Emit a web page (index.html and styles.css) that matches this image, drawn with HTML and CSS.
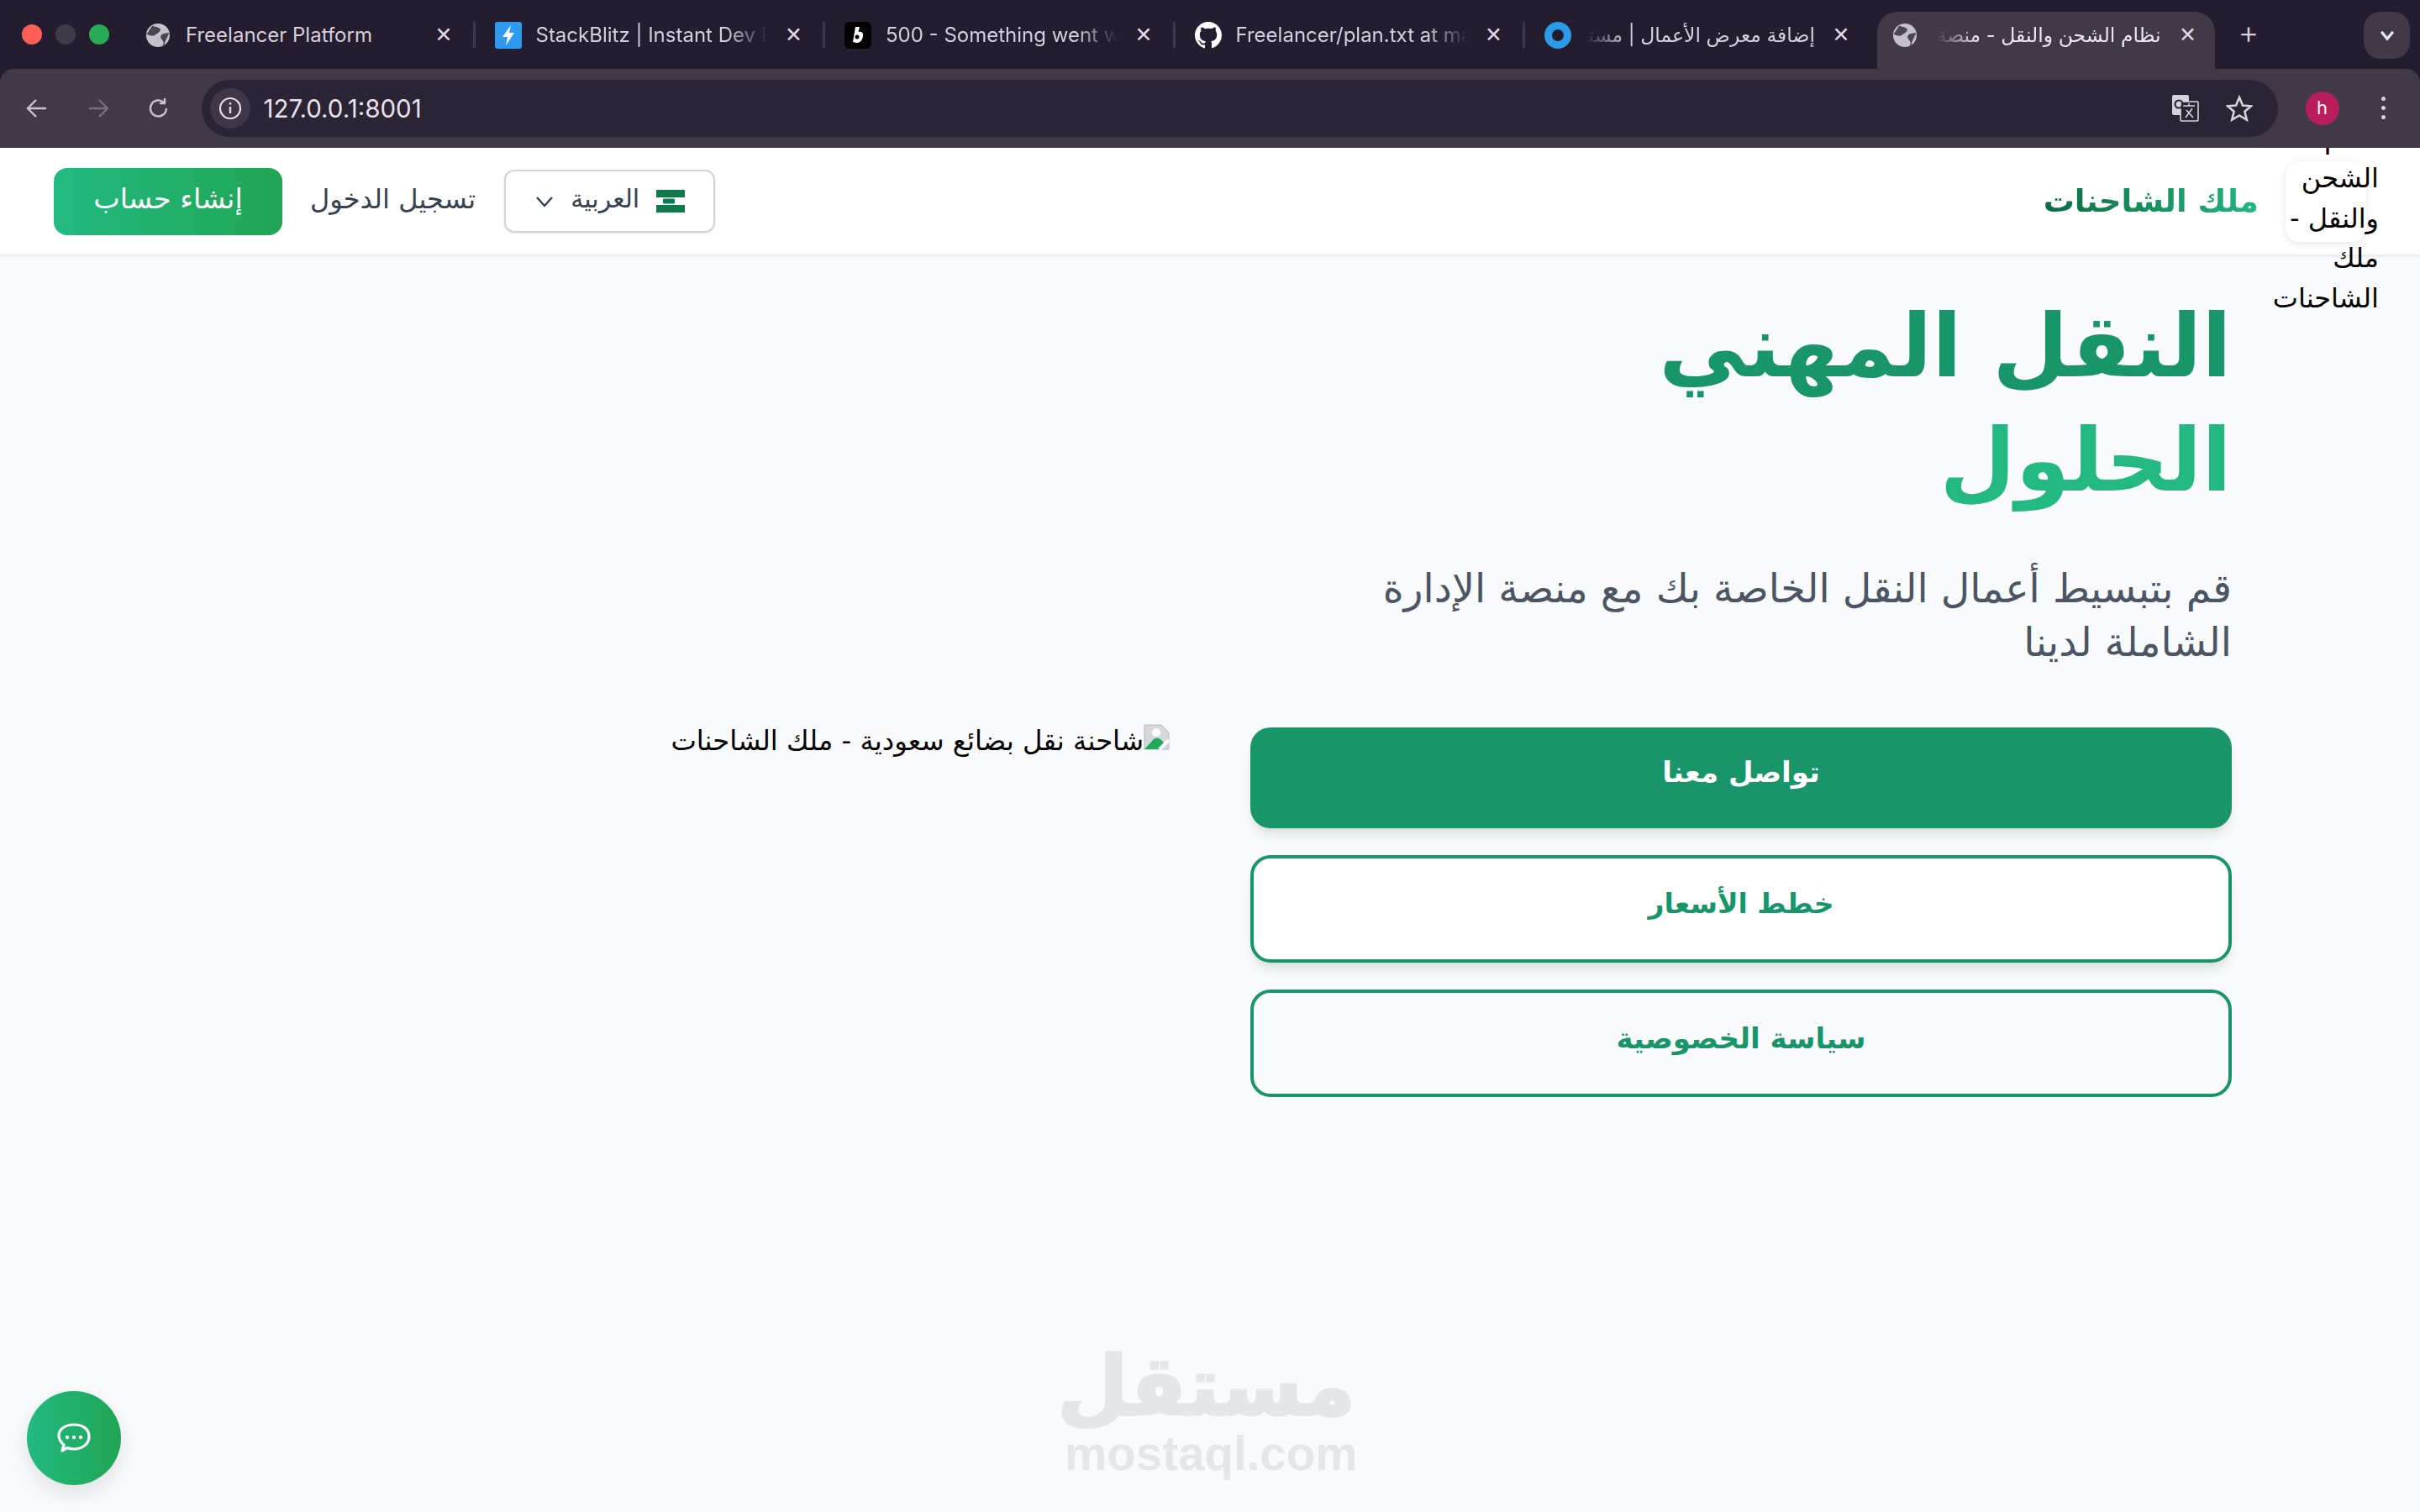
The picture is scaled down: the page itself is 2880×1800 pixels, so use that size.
FILE: index.html
```html
<!DOCTYPE html>
<html lang="ar">
<head>
<meta charset="utf-8">
<title>نظام الشحن والنقل - ملك الشاحنات</title>
<link rel="stylesheet" href="styles.css">
</head>
<body>
<div class="browser">
  <div class="tabstrip">
    <div class="lights"><i class="light red"></i><i class="light grey"></i><i class="light green"></i></div>
    <div class="tab">
      <svg class="fav" viewBox="0 0 32 32"><circle cx="16" cy="16" r="14" fill="#c4c2c8"/><path d="M9 5c4 3 8 1 9 4s-4 4-6 6-7 0-9-1M29 14c-4 0-8 0-9 3s2 4 3 6 0 5-1 6" fill="#4b4552" stroke="#4b4552" stroke-width="1.5"/></svg>
      <span class="title">Freelancer Platform</span><span class="close">✕</span>
    </div>
    <div class="tab">
      <svg class="fav" viewBox="0 0 32 32"><rect x="0" y="0" width="32" height="32" rx="3" fill="#2f9bf0"/><path d="M19 4 9 18h6l-2 10 10-15h-6z" fill="#fff"/></svg>
      <span class="title fade">StackBlitz | Instant Dev Environments</span><span class="close">✕</span>
    </div>
    <div class="tab">
      <svg class="fav" viewBox="0 0 32 32"><rect width="32" height="32" rx="6" fill="#000"/><path d="M13 6h5l-1.500 6c4-1 6 1 5.500 5-.5 5-4 8-7 8-2 0-4-1-5-1z" fill="#fff"/><circle cx="15" cy="18" r="2.500" fill="#000"/></svg>
      <span class="title fade">500 - Something went wrong</span><span class="close">✕</span>
    </div>
    <div class="tab">
      <svg class="fav" viewBox="0 0 16 16"><path fill="#fff" d="M8 0C3.580 0 0 3.580 0 8c0 3.540 2.290 6.530 5.470 7.590.4.070.55-.17.55-.38 0-.19-.01-.82-.01-1.490-2.010.37-2.530-.49-2.690-.94-.09-.23-.48-.94-.82-1.130-.28-.15-.68-.52-.01-.53.63-.01 1.080.58 1.230.82.720 1.210 1.870.87 2.330.66.070-.52.280-.87.510-1.070-1.780-.2-3.640-.89-3.640-3.950 0-.87.310-1.590.820-2.150-.08-.2-.36-1.020.08-2.120 0 0 .67-.21 2.200.82.640-.18 1.320-.27 2-.27s1.360.09 2 .27c1.530-1.040 2.200-.82 2.200-.82.440 1.100.16 1.920.08 2.120.51.560.820 1.270.820 2.150 0 3.070-1.870 3.750-3.650 3.950.290.250.540.730.540 1.480 0 1.070-.01 1.930-.01 2.200 0 .210.150.460.550.380A8.010 8.010 0 0 0 16 8c0-4.420-3.580-8-8-8z"/></svg>
      <span class="title fade">Freelancer/plan.txt at main</span><span class="close">✕</span>
    </div>
    <div class="tab">
      <svg class="fav" viewBox="0 0 32 32"><circle cx="16" cy="16" r="11.500" fill="none" stroke="#2b9be6" stroke-width="9"/></svg>
      <span class="title arabic">إضافة معرض الأعمال | مستقل</span><span class="close">✕</span>
    </div>
    <div class="tab active">
      <svg class="fav" viewBox="0 0 32 32"><circle cx="16" cy="16" r="14" fill="#c4c2c8"/><path d="M9 5c4 3 8 1 9 4s-4 4-6 6-7 0-9-1M29 14c-4 0-8 0-9 3s2 4 3 6 0 5-1 6" fill="#4b4552" stroke="#4b4552" stroke-width="1.500"/></svg>
      <span class="title arabic">نظام الشحن والنقل - منصة إدارة</span><span class="close">✕</span>
    </div>
    <span class="newtab">+</span>
    <span class="tabmenu"><svg viewBox="0 0 16 16"><path d="M3 5l5 6 5-6" fill="none" stroke="#e8e2ec" stroke-width="2.400"/></svg></span>
  </div>
  <div class="toolbar">
    <svg class="nav" viewBox="0 0 28 28"><path d="M25 14H4M13 4 3 14l10 10" fill="none" stroke="#c9c3cd" stroke-width="2.400"/></svg>
    <svg class="nav dim" viewBox="0 0 28 28"><path d="M3 14h21M15 4l10 10-10 10" fill="none" stroke="#77717d" stroke-width="2.400"/></svg>
    <svg class="nav" viewBox="0 0 28 28"><path d="M23 14a9.500 9.500 0 1 1-3-7M21 2v6h-6" fill="none" stroke="#c9c3cd" stroke-width="2.400"/></svg>
    <div class="omnibox">
      <span class="chip"><svg viewBox="0 0 28 28"><circle cx="14" cy="14" r="12" fill="none" stroke="#e4dee8" stroke-width="2.200"/><path d="M14 12v8M14 7v2.500" stroke="#e4dee8" stroke-width="2.400"/></svg></span>
      <span class="url">127.0.0.1:8001</span>
      <svg class="translate" viewBox="0 0 32 32"><rect x="0" y="0" width="20" height="24" rx="2" fill="#d8d0dc"/><rect x="10" y="8" width="21" height="23" rx="1" fill="#2b2435" stroke="#d8d0dc" stroke-width="1.600"/><path d="M13 13h14M20 10v3M16 27l8-11M17 18l8 9" fill="none" stroke="#d8d0dc" stroke-width="1.600"/><circle cx="8" cy="11" r="4.500" fill="none" stroke="#2b2435" stroke-width="2.200"/></svg>
      <svg class="star" viewBox="0 0 32 32"><path d="M16 3l4 9.500 10 .8-7.600 6.500 2.400 9.800L16 24.400 7.200 29.600 9.600 19.800 2 13.300l10-.8z" fill="none" stroke="#d8d0dc" stroke-width="2.600"/></svg>
    </div>
    <span class="avatar">h</span>
    <span class="dots"><i></i><i></i><i></i></span>
  </div>
</div>

<header class="site-header">
  <div class="brand">
    <div class="logo-card"><span class="logo-alt">نظام<br>الشحن<br>والنقل -<br>ملك<br>الشاحنات</span></div>
    <span class="brand-name">ملك الشاحنات</span>
  </div>
  <nav class="actions">
    <button class="lang">
      <svg class="flag" viewBox="0 0 34 27"><rect width="34" height="27" fill="#fff"/><rect width="34" height="9" fill="#0f7a4b"/><rect y="18" width="34" height="9" fill="#0f7a4b"/><rect x="8" y="10.500" width="14" height="6" rx="1" fill="#0f7a4b"/></svg>
      <span class="lang-name">العربية</span>
      <svg class="caret" viewBox="0 0 24 16"><path d="M3 3l9 10 9-10" fill="none" stroke="#374151" stroke-width="2.400"/></svg>
    </button>
    <a class="login">تسجيل الدخول</a>
    <a class="signup">إنشاء حساب</a>
  </nav>
</header>

<main class="hero">
  <h1 class="hero-title"><span class="line-one">النقل المهني</span><span class="line-two">الحلول</span></h1>
  <p class="hero-sub">قم بتبسيط أعمال النقل الخاصة بك مع منصة الإدارة الشاملة لدينا</p>
  <div class="hero-row">
    <div class="cta">
      <a class="btn primary">تواصل معنا</a>
      <a class="btn secondary">خطط الأسعار</a>
      <a class="btn outline">سياسة الخصوصية</a>
    </div>
    <div class="broken">
      <svg class="broken-icon" viewBox="0 0 31 31"><path d="M1 1h20l9 9v20H1z" fill="#d5d7da" stroke="#b8babd"/><circle cx="15" cy="10" r="5" fill="#fff"/><path d="M1 30 12 18q4-3 8 0l4 4-7 8z" fill="#22a85a"/><path d="M19 30l11-11" stroke="#fff" stroke-width="4"/></svg>
      <span>شاحنة نقل بضائع سعودية - ملك الشاحنات</span>
    </div>
  </div>
</main>

<div class="watermark"><span class="wm-ar">مستقل</span><span class="wm-en">mostaql.com</span></div>

<button class="chat"><svg viewBox="0 0 40 36"><path d="M6 33l2-7C3 22 2 18 2 15 2 7 10 2 20 2s18 5 18 14-8 15-18 15c-3 0-6-.5-8-1.500z" fill="none" stroke="#fff" stroke-width="3.200" stroke-linejoin="round"/><circle cx="12" cy="17" r="2.200" fill="#fff"/><circle cx="20" cy="17" r="2.200" fill="#fff"/><circle cx="28" cy="17" r="2.200" fill="#fff"/></svg></button>
</body>
</html>
```
FILE: styles.css
```css
* { box-sizing: border-box; }
html, body { margin: 0; height: 1800px; overflow: hidden; }
body { background: #f9fafb; font-family: "DejaVu Sans", sans-serif; color: #000; position: relative; }

.browser { position: relative; z-index: 3; height: 176px; background: #231d2f; font-family: Inter, "DejaVu Sans", sans-serif; }
.tabstrip { display: flex; align-items: flex-end; height: 82px; position: relative; }
.lights { display: flex; gap: 16px; width: 149px; padding: 0 0 29px 26px; }
.light { width: 24px; height: 24px; border-radius: 50%; }
.red { background: #ff5f57; }
.grey { background: #403a48; }
.green { background: #27ab54; }
.tab { width: 416.500px; height: 68px; display: flex; align-items: center; padding: 0 0 13px 23px; position: relative; color: #d6cfdb; font-size: 24px; }
.tab::after { content: ""; position: absolute; right: 0; top: 12px; width: 3px; height: 31px; background: #3f3847; }
.tab:has(+ .active)::after { display: none; }
.fav { width: 32px; height: 32px; flex: none; }
.title { width: 276px; margin-left: 17px; overflow: hidden; white-space: nowrap; flex: none; }
.fade { -webkit-mask-image: linear-gradient(to left, transparent 0, #000 50px); mask-image: linear-gradient(to left, transparent 0, #000 50px); }
.arabic { width: 273px; direction: rtl; font-size: 23.500px; -webkit-mask-image: linear-gradient(to right, transparent 0, #000 50px); mask-image: linear-gradient(to right, transparent 0, #000 50px); }
.close { margin-left: 18px; font-size: 25px; line-height: 1; width: 26px; text-align: center; flex: none; color: #e0dae4; }
.tab.active { width: 402px; margin-left: 2px; background: #413848; border-radius: 24px 24px 0 0; padding-left: 17px; color: #ece6f0; }
.tab.active::after { display: none; }
.tab.active .title { width: 268px; margin-left: 21px; }
.tab.active .close { margin-left: 19px; }
.newtab { position: absolute; left: 2660px; top: 14px; width: 32px; font-size: 38px; line-height: 48px; text-align: center; color: #d6cfdb; font-weight: 300; }
.tabmenu { position: absolute; left: 2813px; top: 14px; width: 55px; height: 56px; background: #413848; border-radius: 20px; display: flex; align-items: center; justify-content: center; }
.tabmenu svg { width: 22px; height: 22px; }

.toolbar { height: 94px; background: #413848; border-radius: 16px 16px 0 0; display: flex; align-items: center; padding: 0 0 1px 30px; }
.nav { width: 28px; height: 28px; margin-right: 44.500px; flex: none; }
.omnibox { width: 2471px; height: 68px; margin-left: -8px; background: #2b2435; border-radius: 34px; display: flex; align-items: center; padding: 0 30px 0 10px; }
.chip { width: 48px; height: 48px; border-radius: 50%; background: #3f3648; display: flex; align-items: center; justify-content: center; flex: none; }
.chip svg { width: 28px; height: 28px; }
.url { margin-left: 16px; font-size: 29.500px; color: #e8e2ec; flex: 1; }
.translate { width: 32px; height: 32px; margin-right: 32px; }
.star { width: 32px; height: 32px; }
.avatar { width: 40px; height: 40px; margin-left: 33px; border-radius: 50%; background: #b81e5b; color: #fff; font-size: 22px; text-align: center; line-height: 38px; flex: none; }
.dots { display: flex; flex-direction: column; gap: 6px; margin-left: 50px; }
.dots i { width: 5px; height: 5px; border-radius: 50%; background: #d8d0dc; }

.site-header { height: 127px; background: #fff; box-shadow: 0 1px 4px rgba(0,0,0,.12); direction: rtl; display: flex; justify-content: space-between; align-items: center; padding: 0 64px; position: relative; z-index: 2; }
.brand { display: flex; align-items: center; gap: 32px; }
.logo-card { width: 96px; height: 96px; background: #fff; border-radius: 16px; box-shadow: 0 2px 8px rgba(0,0,0,.1); position: relative; }
.logo-alt { position: absolute; top: -50px; right: -15px; width: 140px; font-size: 32px; line-height: 47.500px; color: #000; }
.brand-name { font-size: 37px; font-weight: 700; background: linear-gradient(to left, #22b77f, #0e6a42); -webkit-background-clip: text; background-clip: text; color: transparent; }
.actions { display: flex; align-items: center; }
.lang { width: 251px; height: 75px; display: flex; align-items: center; background: #fff; border: 2px solid #d1d5db; border-radius: 12px; padding: 0 34px; font: inherit; font-size: 30px; color: #374151; box-shadow: 0 1px 3px rgba(0,0,0,.1); }
.lang-name { position: relative; top: -3px; }
.flag { width: 34px; height: 27px; margin-left: 20px; }
.caret { width: 24px; height: 16px; margin-right: auto; }
.login { margin: 0 34px 0 33px; padding-bottom: 6px; font-size: 32px; color: #374151; }
.signup { width: 272px; height: 80px; display: flex; align-items: center; justify-content: center; padding-bottom: 6px; border-radius: 16px; font-size: 33.500px; color: #fff; background: linear-gradient(to right, #22ba82, #20a553); }

.hero { direction: rtl; padding: 41px 224px 0; }
.hero-title { margin: 0; font-size: 104px; line-height: 136px; font-weight: 700; }
.line-one { display: block; color: #18966a; }
.line-two { display: block; color: #24b983; }
.hero-sub { width: 1168px; margin: 53px 0 0; font-size: 47.500px; line-height: 64px; color: #4b5563; }
.hero-row { display: grid; grid-template-columns: 1168px 1168px; gap: 96px; margin-top: 69px; }
.cta { display: flex; flex-direction: column; gap: 32px; }
.btn { display: block; text-align: center; border-radius: 24px; font-size: 34px; font-weight: 700; }
.primary { height: 120px; padding-top: 33px; background: #18966a; color: #fff; box-shadow: 0 10px 15px -3px rgba(0,0,0,.1), 0 4px 6px -4px rgba(0,0,0,.1); }
.secondary { height: 128px; padding-top: 34px; background: #fff; color: #18966a; border: 4px solid #18966a; box-shadow: 0 10px 15px -3px rgba(0,0,0,.1), 0 4px 6px -4px rgba(0,0,0,.1); font-size: 33px; }
.outline { height: 128px; padding-top: 34px; color: #18966a; border: 4px solid #18966a; }
.broken { display: flex; align-items: flex-start; font-size: 32.300px; line-height: 40px; margin-top: -4px; }
.broken-icon { width: 31px; height: 31px; flex: none; }

.watermark { position: absolute; left: 1267px; top: 1600px; width: 346px; color: #e5e6e8; text-align: center; }
.wm-ar { display: block; direction: rtl; font-size: 97px; line-height: 101px; font-weight: 700; -webkit-text-stroke: 3px #e5e6e8; }
.wm-en { display: block; font-family: "Liberation Sans", sans-serif; font-size: 56.500px; line-height: 60px; font-weight: 700; }

.chat { position: absolute; left: 32px; top: 1656px; width: 112px; height: 112px; border: 0; border-radius: 50%; background: linear-gradient(to right, #22ba82, #20a553); box-shadow: 0 10px 25px rgba(0,0,0,.1); display: flex; align-items: center; justify-content: center; padding: 0; }
.chat svg { width: 40px; height: 36px; }
```
